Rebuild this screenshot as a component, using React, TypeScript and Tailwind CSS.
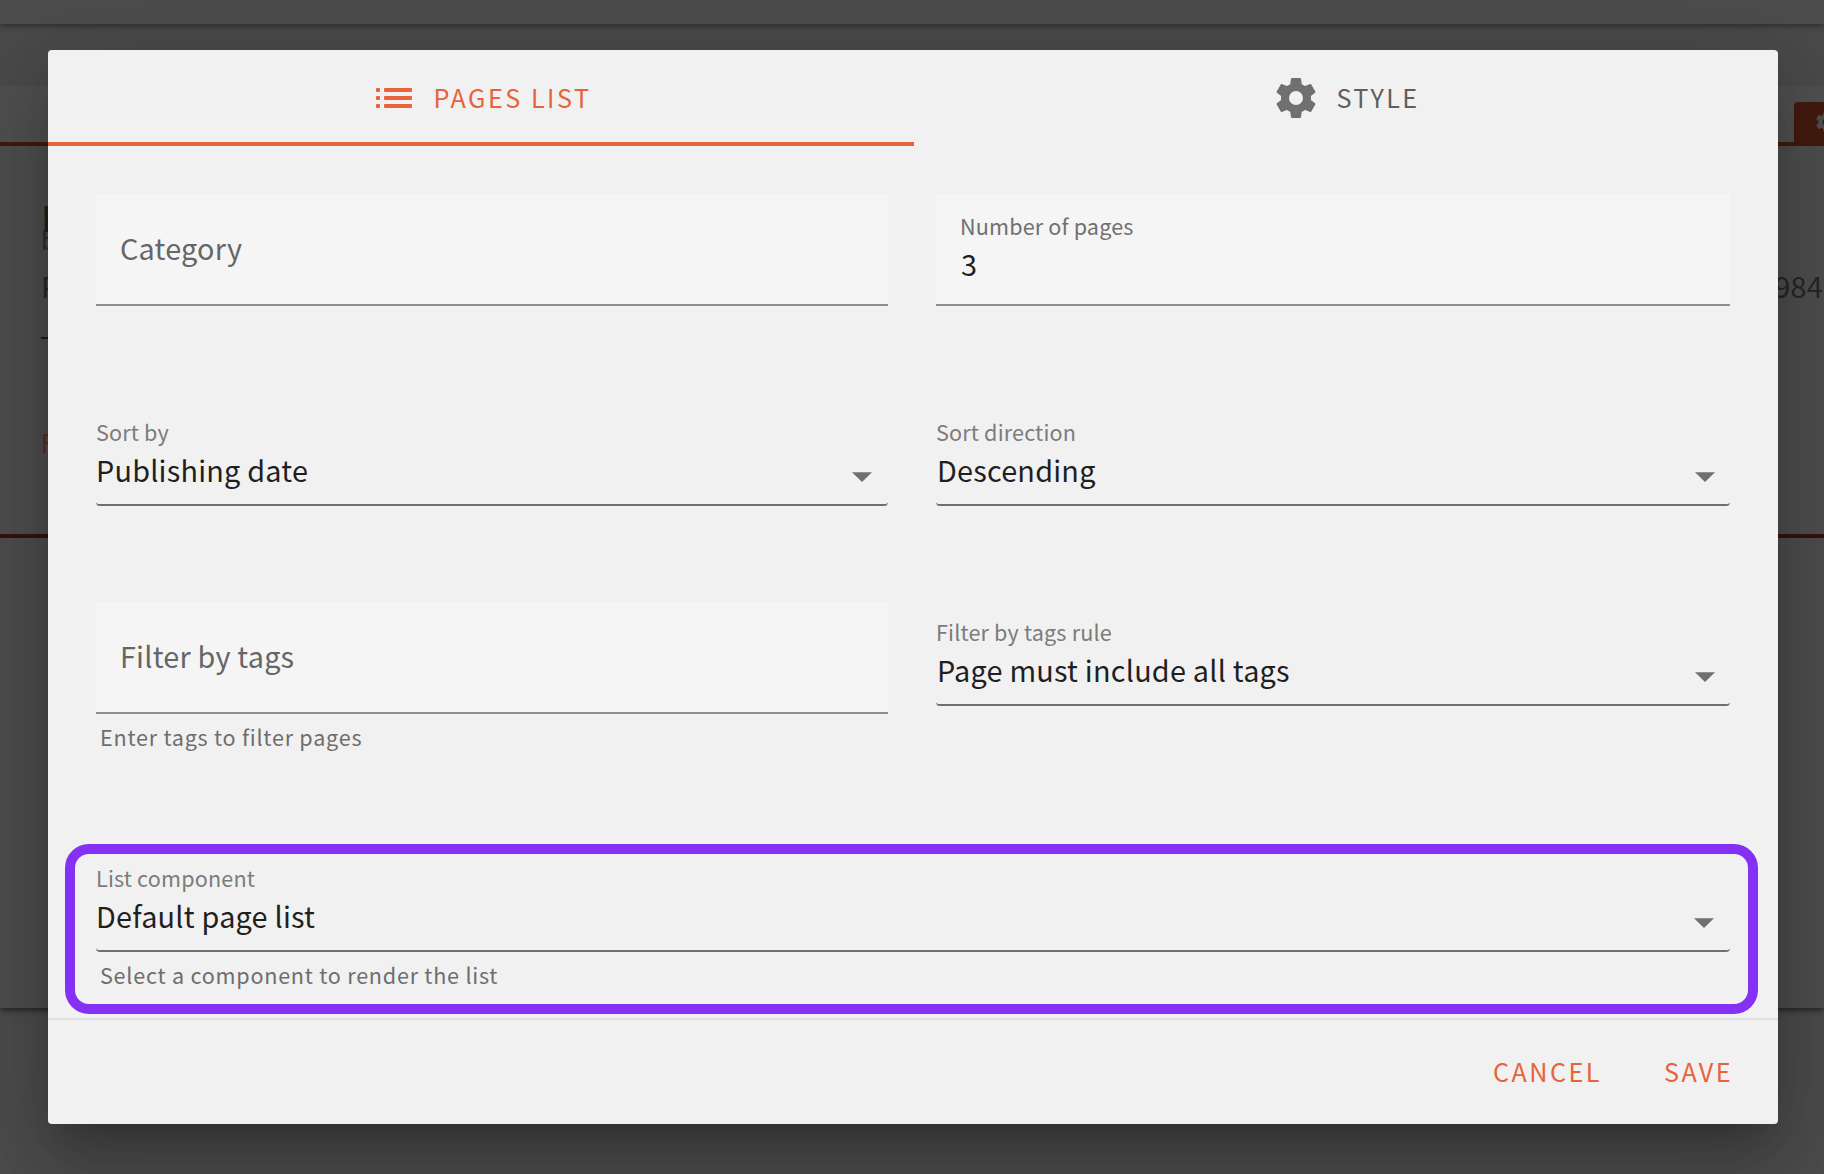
import React from "react";

const GEAR =
  "M12,15.5A3.5,3.5 0 0,1 8.5,12A3.5,3.5 0 0,1 12,8.5A3.5,3.5 0 0,1 15.5,12A3.5,3.5 0 0,1 12,15.5M19.43,12.97C19.47,12.65 19.5,12.33 19.5,12C19.5,11.67 19.47,11.34 19.43,11L21.54,9.37C21.73,9.22 21.78,8.95 21.66,8.73L19.66,5.27C19.54,5.05 19.27,4.96 19.05,5.05L16.56,6.05C16.04,5.66 15.5,5.32 14.87,5.07L14.5,2.42C14.46,2.18 14.25,2 14,2H10C9.75,2 9.54,2.18 9.5,2.42L9.13,5.07C8.5,5.32 7.96,5.66 7.44,6.05L4.95,5.05C4.73,4.96 4.46,5.05 4.34,5.27L2.34,8.73C2.21,8.95 2.27,9.22 2.46,9.37L4.57,11C4.53,11.34 4.5,11.67 4.5,12C4.5,12.33 4.53,12.65 4.57,12.97L2.46,14.63C2.27,14.78 2.21,15.05 2.34,15.27L4.34,18.73C4.46,18.95 4.73,19.03 4.95,18.95L7.44,17.94C7.96,18.34 8.5,18.68 9.13,18.93L9.5,21.58C9.54,21.82 9.75,22 10,22H14C14.25,22 14.46,21.82 14.5,21.58L14.87,18.93C15.5,18.67 16.04,18.34 16.56,17.94L19.05,18.95C19.27,19.03 19.54,18.95 19.66,18.73L21.66,15.27C21.78,15.05 21.73,14.78 21.54,14.63L19.43,12.97Z";

function Gear({ className }: { className: string }) {
  return (
    <svg viewBox="0 0 24 24" fill="currentColor" className={className}>
      <path d={GEAR} />
    </svg>
  );
}

function ListIcon() {
  return (
    <svg width="36" height="20" viewBox="0 0 36 20" fill="currentColor" className="shrink-0">
      {[0, 8, 16].map((y) => (
        <g key={y}>
          <rect x="0" y={y} width="4" height="4" rx="1" />
          <rect x="8" y={y} width="28" height="4" rx="1" />
        </g>
      ))}
    </svg>
  );
}

function TextField({ label, value }: { label: string; value?: string }) {
  return (
    <div className="h-28 border-b-2 border-[#8e8e8e] bg-[#f5f5f5] px-6">
      {value ? (
        <>
          <div className="pt-[16px] text-[21.6px] leading-8 tracking-[0.15px] text-[#707070]">{label}</div>
          <div className="pl-px pt-[4px] text-[28.8px] leading-9 tracking-[0.22px] text-[#1f1f1f]">{value}</div>
        </>
      ) : (
        <div className="pt-[36px] text-[28.8px] leading-9 tracking-[0.22px] text-[#666666]">{label}</div>
      )}
    </div>
  );
}

function SelectField({ label, value, inset }: { label: string; value: string; inset?: boolean }) {
  return (
    <div className="h-24 rounded-b-[4px] border-b-2 border-[#707070]">
      <div className="pt-[6px] text-[21.6px] leading-8 tracking-[0.16px] text-[#7c7c7c]">{label}</div>
      <div className={inset ? "flex items-start justify-between pl-px pr-[15px] pt-1" : "flex items-start justify-between pr-4 pt-1"}>
        <span className="text-[28.8px] leading-9 tracking-[0.23px] text-[#1f1f1f]">{value}</span>
        <svg width="20" height="10" viewBox="0 0 20 10" className="mt-5" fill="#707070">
          <path d="M0 0.3H20L10 10Z" />
        </svg>
      </div>
    </div>
  );
}

function Helper({ children }: { children: React.ReactNode }) {
  return <p className="pl-1 pt-[7px] text-[21.6px] leading-8 tracking-[0.75px] text-[#6e6e6e]">{children}</p>;
}

/* Dimmed page that sits behind the dialog */
function Backdrop() {
  return (
    <div className="flex h-full flex-col bg-[#4c4c4c]">
      <div className="z-10 h-6 shrink-0 bg-[#4d4d4d] shadow-[0_2px_6px_rgba(0,0,0,0.4)]" />
      <div className="h-[62px] shrink-0 bg-[#4a4a4a]" />
      <div className="flex h-[60px] shrink-0 items-end justify-end border-b-4 border-[#431a0f] bg-[#505050]">
        <div className="flex h-10 w-[30px] items-center overflow-hidden rounded-tl bg-[#431a0f] pl-5 text-[#505050]">
          <Gear className="size-6 shrink-0" />
        </div>
      </div>
      <div className="flex h-[392px] shrink-0 justify-between border-b-4 border-[#3a140b] bg-[#4e4e4e] pl-[41px] shadow-[0_2px_4px_rgba(0,0,0,0.3)]">
        <div className="w-8">
          <div className="pt-[57px] text-[36px] leading-[26px] text-[#202020]">H</div>
          <div className="text-[25px] leading-5 text-[#2c2c2c]">b</div>
          <div className="pt-[19px] text-[28.8px] leading-9 text-[#262626]">P</div>
          <div className="mt-[33px] h-0.5 bg-[#202020]" />
          <div className="pt-[85px] text-[25.2px] leading-9 text-[#642a1a]">F</div>
        </div>
        <div className="pr-px pt-[122px] text-[28.8px] leading-9 tracking-[0.3px] text-[#262626]">984</div>
      </div>
      <div className="h-[470px] shrink-0 bg-[#4d4d4d] shadow-[0_2px_6px_rgba(0,0,0,0.6)]" />
      <div className="grow" />
    </div>
  );
}

export default function App() {
  return (
    <div className="relative h-[1174px] w-[1824px] overflow-hidden font-['Noto_Sans_CJK_JP','Noto_Sans',sans-serif]">
      <Backdrop />
      <div className="absolute inset-0 z-20 pl-12 pr-[46px] pt-[50px]">
        <div className="flex h-[1074px] flex-col rounded-[4px] bg-[#f1f1f1] shadow-[0_22px_30px_-14px_rgba(0,0,0,0.2),0_48px_76px_6px_rgba(0,0,0,0.14),0_18px_92px_16px_rgba(0,0,0,0.12)]">
          <div className="flex h-24 shrink-0">
            <div className="flex w-[866px] items-center justify-center gap-[21px] border-b-4 border-[#e86339] pl-[6px] pt-1 text-[#e86339]">
              <ListIcon />
              <span className="-mt-0.5 text-[25.2px] leading-9 tracking-[2.5px]">PAGES LIST</span>
            </div>
            <div className="flex grow items-center justify-center gap-4 text-[#5f5f5f]">
              <Gear className="size-12 text-[#707070]" />
              <span className="-mt-0.5 text-[25.2px] leading-9 tracking-[2.4px]">STYLE</span>
            </div>
          </div>
          <div className="grid h-[872px] shrink-0 grid-cols-[792px_794px] content-start gap-x-12 px-12 pt-12">
            <div className="h-[216px]">
              <TextField label="Category" />
            </div>
            <div>
              <TextField label="Number of pages" value="3" />
            </div>
            <div className="h-48">
              <SelectField label="Sort by" value="Publishing date" />
            </div>
            <div>
              <SelectField label="Sort direction" value="Descending" inset />
            </div>
            <div className="h-[242px]">
              <TextField label="Filter by tags" />
              <Helper>Enter tags to filter pages</Helper>
            </div>
            <div className="pt-2">
              <SelectField label="Filter by tags rule" value="Page must include all tags" inset />
            </div>
            <div className="col-span-2 -ml-[31px] -mr-7 h-[170px] rounded-[24px] border-[10px] border-[#8431f5] pl-[21px] pr-[18px]">
              <div className="pt-0.5">
                <SelectField label="List component" value="Default page list" />
                <Helper>Select a component to render the list</Helper>
              </div>
            </div>
          </div>
          <div className="flex grow items-center justify-end gap-[62px] border-t-2 border-[#e0e0e0] pb-0.5 pr-[45px] text-[25.2px] leading-9 tracking-[2.45px] text-[#e86339]">
            <span>CANCEL</span>
            <span>SAVE</span>
          </div>
        </div>
      </div>
    </div>
  );
}
